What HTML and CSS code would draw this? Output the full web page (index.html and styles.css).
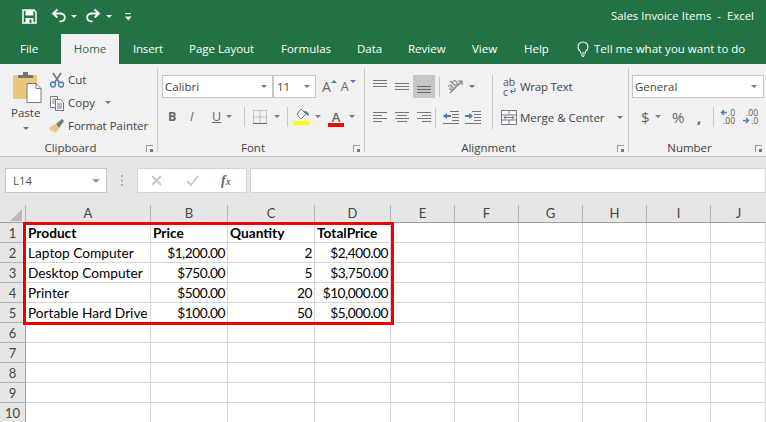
FILE: index.html
```html
<!DOCTYPE html>
<html lang="en">
<head>
<meta charset="utf-8">
<title>Sales Invoice Items - Excel</title>
<link rel="stylesheet" href="styles.css">
</head>
<body>
<div class="app">
  <header class="titlebar">
    <div class="qat">
      <svg class="q-save" width="15" height="15" viewBox="0 0 15 15"><path d="M1 1h11l2 2v11H1z" fill="none" stroke="#fff" stroke-width="1.500"/><rect x="3.500" y="1.500" width="8" height="5" fill="#fff"/><rect x="3.500" y="9" width="8" height="5" fill="#fff"/><rect x="7.500" y="10.500" width="2" height="3.500" fill="#217346"/></svg>
      <svg class="q-undo" width="16" height="16" viewBox="0 0 16 16"><path d="M6.500 1.500 2 5.500l4.500 4M2.500 5.500h7c6 0 6 8-1 8" fill="none" stroke="#fff" stroke-width="1.800"/></svg>
      <span class="q-caret c1"></span>
      <svg class="q-redo" width="16" height="16" viewBox="0 0 16 16"><path d="M9.500 1.500 14 5.500l-4.500 4M13.500 5.500h-7c-6 0-6 8 1 8" fill="none" stroke="#fff" stroke-width="1.800"/></svg>
      <span class="q-caret c2"></span>
      <svg class="q-more" width="7" height="8" viewBox="0 0 7 8"><path d="M0 .500h6" stroke="#fff" stroke-width="1.200"/><path d="M0 3.500h6.500L3.250 7.500z" fill="#fff"/></svg>
    </div>
    <div class="doc-title">Sales Invoice Items &nbsp;-&nbsp; Excel</div>
  </header>

  <nav class="tabs">
    <span class="tab t-file">File</span>
    <span class="tab t-home">Home</span>
    <span class="tab t-insert">Insert</span>
    <span class="tab t-layout">Page Layout</span>
    <span class="tab t-formulas">Formulas</span>
    <span class="tab t-data">Data</span>
    <span class="tab t-review">Review</span>
    <span class="tab t-view">View</span>
    <span class="tab t-help">Help</span>
    <svg class="bulb" width="12" height="16" viewBox="0 0 12 16"><path d="M3.500 10.500C2 9.500 1 8 1 6a5 5 0 0 1 10 0c0 2-1 3.500-2.500 4.500V12h-5zM4 14h4M5 15.500h2" fill="none" stroke="#fff" stroke-width="1.100"/></svg>
    <span class="tab t-tell">Tell me what you want to do</span>
  </nav>

  <section class="ribbon">
    <div class="group g-clip">
      <div class="g-body clip-body">
        <div class="paste">
          <svg width="30" height="31" viewBox="0 0 30 31"><rect x="1" y="3" width="24" height="24" rx="1" fill="#e9c77c"/><path d="M6 6V3h5V0h5v3h5v3z" fill="#767676"/><path d="M15 11.500h9l5 5v14H15z" fill="#fff" stroke="#7a7a7a"/><path d="M24 11.500v5h5" fill="none" stroke="#7a7a7a"/></svg>
          <span class="paste-label">Paste</span>
          <span class="caret"></span>
        </div>
        <div class="clip-list">
          <div class="clip-item">
            <svg width="16" height="16" viewBox="0 0 16 16"><path d="M4 1l6 9M12 1L6 10" stroke="#6d6d6d" stroke-width="1.500" fill="none"/><circle cx="4" cy="12.500" r="2.500" fill="none" stroke="#3f7cc0" stroke-width="1.300"/><circle cx="12" cy="12.500" r="2.500" fill="none" stroke="#3f7cc0" stroke-width="1.300"/></svg>
            <span>Cut</span>
          </div>
          <div class="clip-item">
            <svg width="16" height="16" viewBox="0 0 16 16"><path d="M1.500 1.500h7v11h-7z" fill="#fff" stroke="#777"/><path d="M6.500 4.500h5l3 3v8h-8z" fill="#fff" stroke="#777"/><path d="M8 9h5M8 11h5M8 13h5" stroke="#3f7cc0"/><path d="M3 4h4M3 6h3M3 8h3" stroke="#888"/></svg>
            <span>Copy</span><span class="caret c-copy"></span>
          </div>
          <div class="clip-item">
            <svg width="16" height="16" viewBox="0 0 16 16"><path d="M0 10l6-4 4 5-4 4-1-2-1 1-1-2-1 1z" fill="#e9c77c"/><path d="M7 6l6-5 2 2-5 7z" fill="#777"/></svg>
            <span>Format Painter</span>
          </div>
        </div>
      </div>
      <div class="g-label"><span>Clipboard</span><span class="launcher"></span></div>
    </div>

    <div class="group g-font">
      <div class="g-body font-body">
        <div class="row r-font1">
          <div class="combo c-name"><span>Calibri</span><i class="caret"></i></div>
          <div class="combo c-size"><span>11</span><i class="caret"></i></div>
          <span class="grow-a">A<b class="up"></b></span>
          <span class="shrink-a">A<b class="down"></b></span>
        </div>
        <div class="row r-font2">
          <span class="fmt f-b">B</span><span class="fmt f-i">I</span><span class="fmt f-u">U</span><i class="caret c-u"></i>
          <i class="sep s-f1"></i>
          <svg class="borders" width="14" height="14" viewBox="0 0 14 14"><path d="M.5.500h13v13H.5zM.5 7h13M7 .500v13" fill="none" stroke="#999" stroke-dasharray="1 1"/><path d="M0 13.500h14" stroke="#666"/></svg>
          <i class="caret c-b"></i>
          <i class="sep s-f2"></i>
          <svg class="fill" width="16" height="16" viewBox="0 0 16 16"><path d="M7 0l5 5-5 5-4-5z" fill="#fff" stroke="#777"/><path d="M10 2c3 0 5 2 5 5l-3-2z" fill="#3f7cc0"/><rect y="12" width="16" height="4" fill="#ffff00"/></svg>
          <i class="caret c-fill"></i>
          <span class="color-a">A<b></b></span>
          <i class="caret c-color"></i>
        </div>
      </div>
      <div class="g-label"><span>Font</span><span class="launcher"></span></div>
    </div>

    <div class="group g-align">
      <div class="g-body align-body">
        <div class="align-tools">
          <div class="row r-a1">
            <svg class="ic" width="14" height="7" viewBox="0 0 14 7"><path d="M0 .500h14M0 3.500h14M0 6.500h14" stroke="#777"/></svg>
            <svg class="ic mid" width="14" height="7" viewBox="0 0 14 7"><path d="M0 .500h14M0 3.500h14M0 6.500h14" stroke="#777"/></svg>
            <span class="selected"><svg width="14" height="7" viewBox="0 0 14 7"><path d="M0 .500h14M0 3.500h14M0 6.500h14" stroke="#666"/></svg></span>
            <i class="sep s-a"></i>
            <span class="orient">
              <span class="orient-ic"><span class="orient-text">ab</span><svg width="16" height="16" viewBox="0 0 16 16"><path d="M3 15 14 4M11 3h4v4" fill="none" stroke="#777" stroke-width="1.100"/></svg></span>
              <i class="caret"></i>
            </span>
          </div>
          <div class="row r-a2">
            <svg class="ic" width="14" height="11" viewBox="0 0 14 11"><path d="M0 .500h14M0 3.500h9M0 6.500h14M0 9.500h9" stroke="#777"/></svg>
            <svg class="ic mid" width="14" height="11" viewBox="0 0 14 11"><path d="M0 .500h14M2 3.500h10M0 6.500h14M2 9.500h10" stroke="#777"/></svg>
            <svg class="ic right" width="14" height="11" viewBox="0 0 14 11"><path d="M0 .500h14M5 3.500h9M0 6.500h14M5 9.500h9" stroke="#777"/></svg>
            <i class="sep s-a"></i>
            <svg class="indent" width="16" height="13" viewBox="0 0 16 13"><path d="M7 .500h9M9 3.500h7M9 6.500h7M9 9.500h7M0 12.500h16" stroke="#777"/><path d="M0 5l4-3v2h4v2H4v2z" fill="#3f7cc0"/></svg>
            <svg class="indent i2" width="16" height="13" viewBox="0 0 16 13"><path d="M7 .500h9M9 3.500h7M9 6.500h7M9 9.500h7M0 12.500h16" stroke="#777"/><path d="M8 5 4 2v2H0v2h4v2z" fill="#3f7cc0"/></svg>
          </div>
        </div>
        <i class="sep s-tall"></i>
        <div class="wrap-col">
          <div class="wm">
            <span class="wrap-ic"><span>ab</span><span class="wrap-c"><span>c</span><svg width="7" height="7" viewBox="0 0 7 7"><path d="M6 0v3.500H1.500M3.500 1.500l-2 2 2 2" fill="none" stroke="#3f7cc0"/></svg></span></span>
            <span class="wrap-label">Wrap Text</span>
          </div>
          <div class="wm">
            <svg width="16" height="15" viewBox="0 0 16 15"><path d="M.5.500h15v14H.5zM.5 5h15M.5 10h15M8 .500V5M8 10v5" fill="#fff" stroke="#777"/><path d="M3 7.500h10" stroke="#3f7cc0"/><path d="M5 5.500 3 7.500l2 2M11 5.500l2 2-2 2" fill="none" stroke="#3f7cc0"/></svg>
            <span>Merge &amp; Center</span><i class="caret c-merge"></i>
          </div>
        </div>
      </div>
      <div class="g-label"><span>Alignment</span><span class="launcher"></span></div>
    </div>

    <div class="group g-num">
      <div class="g-body num-body">
        <div class="combo c-fmt"><span>General</span><i class="caret"></i></div>
        <div class="row r-num">
          <span class="n-dollar">$</span><i class="caret"></i>
          <span class="n-pct">%</span>
          <span class="n-comma">,</span>
          <i class="sep s-n"></i>
          <span class="dec">
            <span class="dline"><svg width="7" height="7" viewBox="0 0 7 7"><path d="M7 3.500H1.500M4 1 1.500 3.500 4 6" fill="none" stroke="#3f7cc0" stroke-width="1.300"/></svg><span>.0</span></span>
            <span class="dline end"><span>.00</span></span>
          </span>
          <span class="dec d2">
            <span class="dline end"><span>.00</span></span>
            <span class="dline"><svg width="7" height="7" viewBox="0 0 7 7"><path d="M0 3.500h5.500M3 1l2.500 2.500L3 6" fill="none" stroke="#3f7cc0" stroke-width="1.300"/></svg><span>.0</span></span>
          </span>
        </div>
      </div>
      <div class="g-label"><span>Number</span><span class="launcher"></span></div>
    </div>
  </section>

  <section class="formula-bar">
    <div class="name-box"><span>L14</span><i class="caret big"></i></div>
    <svg class="dots" width="3" height="11" viewBox="0 0 3 11"><path d="M0 0h2v2H0zM0 4.500h2v2H0zM0 9h2v2H0z" fill="#b0b0b0"/></svg>
    <div class="fx-box">
      <svg width="11" height="11" viewBox="0 0 11 11"><path d="M1 1l9 9M10 1l-9 9" stroke="#c8c8c8" stroke-width="1.800"/></svg>
      <svg class="chk" width="13" height="11" viewBox="0 0 13 11"><path d="M1 6l4 4 7-9" fill="none" stroke="#c8c8c8" stroke-width="1.800"/></svg>
      <span class="fx">f<small>x</small></span>
    </div>
    <div class="formula-input"></div>
  </section>

  <section class="sheet">
    <table class="cells">
      <colgroup>
        <col class="w-rh"><col class="w-a"><col class="w-b"><col class="w-c"><col class="w-d"><col class="w-e"><col class="w-e"><col class="w-e"><col class="w-e"><col class="w-e"><col class="w-j">
      </colgroup>
      <thead>
        <tr><th class="corner"><svg width="15" height="14" viewBox="0 0 15 14"><path d="M13 1v12H1z" fill="#b8b8b8"/></svg></th><th>A</th><th>B</th><th>C</th><th>D</th><th>E</th><th>F</th><th>G</th><th>H</th><th>I</th><th>J</th></tr>
      </thead>
      <tbody>
        <tr><th>1</th><td class="bold">Product</td><td class="bold">Price</td><td class="bold">Quantity</td><td class="bold">TotalPrice</td><td></td><td></td><td></td><td></td><td></td><td></td></tr>
        <tr><th>2</th><td>Laptop Computer</td><td class="num">$1,200.00</td><td class="num">2</td><td class="num">$2,400.00</td><td></td><td></td><td></td><td></td><td></td><td></td></tr>
        <tr><th>3</th><td>Desktop Computer</td><td class="num">$750.00</td><td class="num">5</td><td class="num">$3,750.00</td><td></td><td></td><td></td><td></td><td></td><td></td></tr>
        <tr><th>4</th><td>Printer</td><td class="num">$500.00</td><td class="num">20</td><td class="num">$10,000.00</td><td></td><td></td><td></td><td></td><td></td><td></td></tr>
        <tr><th>5</th><td>Portable Hard Drive</td><td class="num">$100.00</td><td class="num">50</td><td class="num">$5,000.00</td><td></td><td></td><td></td><td></td><td></td><td></td></tr>
        <tr><th>6</th><td></td><td></td><td></td><td></td><td></td><td></td><td></td><td></td><td></td><td></td></tr>
        <tr><th>7</th><td></td><td></td><td></td><td></td><td></td><td></td><td></td><td></td><td></td><td></td></tr>
        <tr><th>8</th><td></td><td></td><td></td><td></td><td></td><td></td><td></td><td></td><td></td><td></td></tr>
        <tr><th>9</th><td></td><td></td><td></td><td></td><td></td><td></td><td></td><td></td><td></td><td></td></tr>
        <tr><th>10</th><td></td><td></td><td></td><td></td><td></td><td></td><td></td><td></td><td></td><td></td></tr>
      </tbody>
    </table>
    <div class="red-box"></div>
  </section>
</div>
</body>
</html>
```
FILE: styles.css
```css
* { box-sizing: border-box; }
html, body { margin: 0; padding: 0; }
body { font-family: "Open Sans", "Noto Sans", sans-serif; font-size: 11.500px; color: #444; }
i { font-style: normal; }
.app { width: 766px; height: 422px; overflow: hidden; display: flex; flex-direction: column; background: #e6e6e6; }

/* Title */
.titlebar { height: 34px; flex: none; background: #217346; color: #fff; display: flex; align-items: flex-start; justify-content: space-between; }
.qat { display: flex; align-items: center; height: 32px; padding-left: 22px; }
.q-undo { margin-left: 14px; }
.q-redo { margin-left: 8px; }
.q-more { margin-left: 13px; margin-top: 1px; }
.q-caret { width: 0; height: 0; border: 3px solid transparent; border-top: 3px solid #fff; border-bottom: 0; margin-top: 1px; }
.q-caret.c1 { margin-left: 4px; }
.q-caret.c2 { margin-left: 5px; }
.doc-title { padding: 7px 12px 0 0; font-size: 11.300px; line-height: 18px; letter-spacing: .05px; }

/* Tabs */
.tabs { height: 30px; flex: none; background: #217346; display: flex; align-items: stretch; color: #fff; font-size: 11.500px; }
.tab { display: flex; align-items: center; line-height: 28px; height: 30px; }
.t-file { margin-left: 20px; width: 41px; }
.t-home { width: 58px; justify-content: center; background: #f1f1f1; color: #217346; }
.t-insert { margin-left: 14px; width: 56px; letter-spacing: -.2px; }
.t-layout { width: 92px; }
.t-formulas { width: 76px; }
.t-data { width: 51px; }
.t-review { width: 64px; }
.t-view { width: 52px; }
.t-help { width: 53px; }
.bulb { margin-top: 7px; }
.t-tell { margin-left: 5px; }

/* Ribbon */
.ribbon { height: 93px; flex: none; background: #f1f1f1; border-bottom: 1px solid #c6c6c6; display: flex; }
.group { display: flex; flex-direction: column; border-right: 1px solid #c9c9c9; margin: 4px 0 0; height: 84px; }
.g-clip { width: 158px; }
.g-font { width: 207px; }
.g-align { width: 264px; }
.g-num { width: 137px; border-right: 0; }
.g-body { flex: none; height: 73px; }
.g-label { height: 14px; flex: none; margin-bottom: -3px; display: flex; justify-content: center; align-items: center; position: relative; color: #444; font-size: 11.500px; line-height: 14px; padding-right: 16px; }
.launcher { position: absolute; right: 4px; bottom: 3px; width: 7px; height: 7px; border-left: 1px solid #999; border-top: 1px solid #999; }
.launcher::after { content: ""; position: absolute; right: 0; bottom: 0; width: 3px; height: 3px; background: #777; }
.caret { display: inline-block; width: 0; height: 0; border: 3px solid transparent; border-top: 3px solid #777; border-bottom: 0; flex: none; }
.row { display: flex; align-items: center; }
.sep { display: block; width: 1px; background: #c6c6c6; flex: none; }

.clip-body { display: flex; padding: 4px 0 0 11px; }
.paste { width: 38px; display: flex; flex-direction: column; align-items: flex-start; }
.paste svg { margin-left: 1px; }
.paste-label { margin-top: 1px; line-height: 18px; font-size: 11.500px; color: #444; }
.paste .caret { margin: 5px 0 0 12px; }
.clip-list { display: flex; flex-direction: column; margin-top: -4px; flex: none; }
.clip-item { display: flex; flex: none; align-items: center; gap: 3px; height: 23px; color: #444; white-space: nowrap; }
.c-copy { margin-left: 7px; }

.font-body { padding: 7px 0 0 4px; }
.r-font1 { height: 23px; }
.combo { height: 23px; background: #fff; border: 1px solid #c6c6c6; display: flex; align-items: center; justify-content: space-between; padding: 0 5px 0 2px; color: #444; }
.c-name { width: 111px; }
.c-size { width: 43px; padding-left: 3px; }
.grow-a, .shrink-a { position: relative; font-size: 14px; line-height: 20px; color: #666; }
.grow-a { margin-left: 6px; }
.shrink-a { margin-left: 10px; font-size: 12.500px; }
.up, .down { position: absolute; left: 9px; top: 3px; width: 0; height: 0; border: 3px solid transparent; }
.up { border-bottom: 3px solid #3f7cc0; border-top: 0; }
.down { border-top: 3px solid #3f7cc0; border-bottom: 0; }
.r-font2 { height: 23px; margin-top: 7px; padding-left: 6px; }
.fmt { width: 22px; font-size: 12.500px; color: #666; line-height: 20px; }
.f-b { font-weight: 700; }
.f-i { font-style: italic; }
.f-u { text-decoration: underline; width: 14px; }
.s-f1 { height: 20px; margin-left: 12px; }
.borders { margin-left: 8px; }
.c-b { margin-left: 7px; }
.s-f2 { height: 20px; margin-left: 7px; }
.fill { margin-left: 6px; }
.c-fill { margin-left: 5px; }
.color-a { position: relative; margin-left: 7px; width: 16px; text-align: center; font-size: 13px; font-weight: 600; line-height: 20px; color: #666; height: 20px; }
.color-a b { position: absolute; left: 0; right: 0; bottom: 0; height: 4px; background: #ff0000; }
.c-color { margin-left: 5px; }

.align-body { display: flex; padding: 7px 0 0 8px; }
.align-tools { width: 119px; }
.r-a1 { height: 23px; }
.r-a1 .ic { margin-top: -6px; }
.r-a1 .ic.mid { margin-top: 0; }
.ic.mid { margin-left: 8px; }
.ic.right { margin-left: 8px; }
.selected { width: 22px; height: 23px; background: #c6c6c6; display: flex; align-items: flex-end; justify-content: center; padding-bottom: 5px; margin-left: 4px; }
.s-a { height: 20px; margin-left: 4px; }
.orient { display: flex; align-items: center; gap: 5px; margin-left: 7px; }
.orient-ic { position: relative; width: 17px; height: 17px; display: block; }
.orient-ic svg { display: block; }
.orient-text { position: absolute; left: -1px; top: 0; font-size: 10px; line-height: 12px; color: #666; transform: rotate(-45deg); }
.r-a2 { height: 23px; margin-top: 8px; }
.indent { margin-left: 7px; }
.indent.i2 { margin-left: 6px; }
.s-tall { height: 54px; }
.wrap-col { padding-left: 8px; }
.wm { display: flex; align-items: center; height: 23px; color: #444; gap: 3px; white-space: nowrap; }
.wm + .wm { margin-top: 8px; }
.wrap-ic { width: 16px; display: flex; flex-direction: column; font-size: 10.500px; line-height: 10px; color: #555; margin-left: 2px; margin-right: -2px; }
.wrap-c { display: flex; align-items: center; gap: 1px; }
.wrap-label { letter-spacing: -.25px; }
.c-merge { margin-left: 9px; }

.num-body { padding: 7px 0 0 3px; }
.c-fmt { width: 132px; padding-right: 6px; }
.r-num { height: 23px; margin-top: 7px; padding-left: 9px; color: #666; }
.n-dollar { font-size: 15px; width: 13px; }
.r-num .caret { margin-left: 1px; }
.n-pct { font-size: 15px; margin-left: 11px; width: 16px; }
.n-comma { font-size: 15px; font-weight: 700; margin-left: 9px; width: 10px; line-height: 12px; }
.s-n { height: 20px; margin-left: 6px; }
.dec { display: flex; flex-direction: column; width: 15px; margin-left: 6px; font-size: 8.500px; line-height: 8px; color: #555; }
.dec.d2 { margin-left: 8px; }
.dline { display: flex; align-items: center; justify-content: space-between; height: 8px; }
.dline.end { justify-content: flex-end; }

/* Formula bar */
.formula-bar { height: 48px; flex: none; display: flex; align-items: flex-start; padding: 11px 0 0 5px; }
.name-box { width: 102px; height: 25px; background: #fff; border: 1px solid #c6c6c6; display: flex; align-items: center; justify-content: space-between; padding: 0 6px 0 7px; font-size: 11.500px; color: #555; }
.caret.big { border-width: 4px; border-bottom: 0; border-top-color: #999; }
.dots { margin: 7px 0 0 14px; }
.fx-box { width: 110px; height: 25px; margin-left: 13px; background: #fff; border: 1px solid #d4d4d4; display: flex; align-items: center; padding: 0 12px 0 13px; }
.chk { margin-left: 24px; }
.fx { margin-left: 22px; font-family: "Liberation Serif", serif; font-style: italic; font-weight: 700; font-size: 14px; color: #666; }
.fx small { font-size: 10px; }
.formula-input { flex: 1; height: 25px; margin-left: 3px; background: #fff; border: 1px solid #d4d4d4; }

/* Sheet */
.sheet { position: relative; flex: 1; min-height: 0; background: #fff; }
.cells { table-layout: fixed; border-collapse: separate; border-spacing: 0; width: 766px; }
.w-rh { width: 26px; } .w-a { width: 125px; } .w-b { width: 77px; } .w-c { width: 87px; } .w-d { width: 76px; }
.w-e { width: 64px; } .w-j { width: 55px; }
.cells th { background: #e6e6e6; font-family: "Lato", sans-serif; font-weight: 400; font-size: 13px; color: #444; padding: 0; border-right: 1px solid #b5b5b5; border-bottom: 1px solid #b5b5b5; text-align: center; }
.cells thead th { height: 18px; line-height: 15px; border-bottom-color: #a0a0a0; }
.cells thead th:last-child { border-right: 0; }
.corner svg { display: block; margin: 2px 0 0 9px; }
.cells tbody th { height: 20px; line-height: 18px; padding-top: 1px; border-right-color: #a0a0a0; }
.cells td { height: 20px; border-right: 1px solid #d4d4d4; border-bottom: 1px solid #d4d4d4; padding: 1px 2px 0 2px; font-family: "Lato", sans-serif; font-size: 13.700px; line-height: 18px; color: #000; white-space: nowrap; overflow: hidden; }
.cells .bold { font-weight: 700; }
.cells .num { text-align: right; letter-spacing: -.45px; }
.red-box { position: absolute; left: 23px; top: 17px; width: 371px; height: 103px; border: 3px solid #ee0000; pointer-events: none; }
```
